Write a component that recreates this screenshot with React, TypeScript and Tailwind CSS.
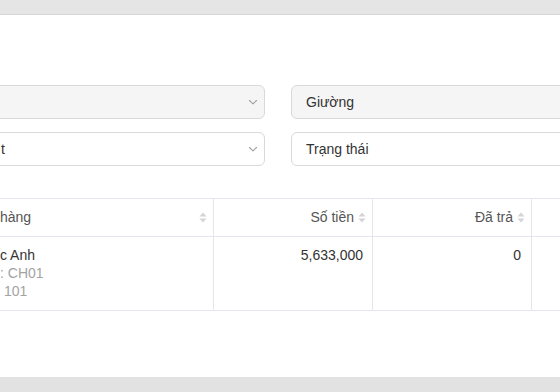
const font = { fontFamily: '"Liberation Sans", Arial, sans-serif' };

function Chevron() {
  return (
    <svg width="10" height="10" viewBox="0 0 10 10" className="text-[#a0a0a0]">
      <path d="M1.5 3.5 L5 6.8 L8.5 3.5" fill="none" stroke="currentColor" strokeWidth="1.1" strokeLinecap="round" strokeLinejoin="round" />
    </svg>
  );
}

function SortIcon() {
  return (
    <svg width="8" height="11" viewBox="0 0 8 11" className="text-[#d4d4d8] shrink-0">
      <path d="M4 0.5 L7.5 4.5 H0.5 Z" fill="currentColor" />
      <path d="M4 10.5 L7.5 6.5 H0.5 Z" fill="currentColor" />
    </svg>
  );
}

function SelectBox({ text, disabled }: { text: string; disabled?: boolean }) {
  return (
    <div
      className={`h-[34px] rounded-[6px] border border-[#d9d9d9] flex items-center justify-end pr-[6px] relative ${
        disabled ? "bg-[#f5f5f5]" : "bg-white"
      }`}
    >
      <span className="absolute left-[35px] text-[14px] text-[#333]">{text}</span>
      <Chevron />
    </div>
  );
}

function InputBox({ text, disabled }: { text: string; disabled?: boolean }) {
  return (
    <div
      className={`h-[34px] rounded-[6px] border border-[#d9d9d9] flex items-center pl-[14px] text-[14px] text-[#333] ${
        disabled ? "bg-[#f5f5f5]" : "bg-white"
      }`}
    >
      {text}
    </div>
  );
}

export default function App() {
  return (
    <div className="w-[560px] h-[392px] overflow-hidden bg-[#e3e3e3] flex flex-col" style={font}>
      <div className="h-[15px] shrink-0 bg-[#e5e5e5] border-b border-[#d6d6d6]" />
      <div className="h-[362px] shrink-0 bg-white overflow-hidden">
        <div className="pt-[70px] -ml-[35px] w-[626px] grid grid-cols-2 gap-x-[26px] gap-y-[13px]">
          <SelectBox text="" disabled />
          <InputBox text="Giường" disabled />
          <SelectBox text="t" />
          <InputBox text="Trạng thái" />
        </div>

        <div className="mt-[32px] border-t border-[#e6e5ee] text-[14px]">
          <div className="flex h-[38px] border-b border-[#e6e5ee] text-[#555]">
            <div className="w-[214px] border-r border-[#e6e5ee] flex items-center justify-between pr-[6px]">
              <span>hàng</span>
              <SortIcon />
            </div>
            <div className="w-[159px] border-r border-[#e6e5ee] flex items-center justify-end gap-[4px] pr-[6px]">
              <span>Số tiền</span>
              <SortIcon />
            </div>
            <div className="w-[159px] border-r border-[#e6e5ee] flex items-center justify-end gap-[4px] pr-[6px]">
              <span>Đã trả</span>
              <SortIcon />
            </div>
            <div className="flex-1" />
          </div>
          <div className="flex h-[74px] border-b border-[#e6e5ee]">
            <div className="w-[214px] border-r border-[#e6e5ee] pt-[9px] leading-[18px]">
              <div className="text-[#333]">c Anh</div>
              <div className="text-[#a3a3a3]">: CH01</div>
              <div className="text-[#a3a3a3] whitespace-pre"> 101</div>
            </div>
            <div className="w-[159px] border-r border-[#e6e5ee] pt-[9px] pr-[9px] text-right leading-[18px] text-[#333]">
              5,633,000
            </div>
            <div className="w-[159px] border-r border-[#e6e5ee] pt-[9px] pr-[10px] text-right leading-[18px] text-[#333]">
              0
            </div>
            <div className="flex-1" />
          </div>
        </div>
      </div>
      <div className="flex-1 bg-[#e2e2e2]" />
    </div>
  );
}
